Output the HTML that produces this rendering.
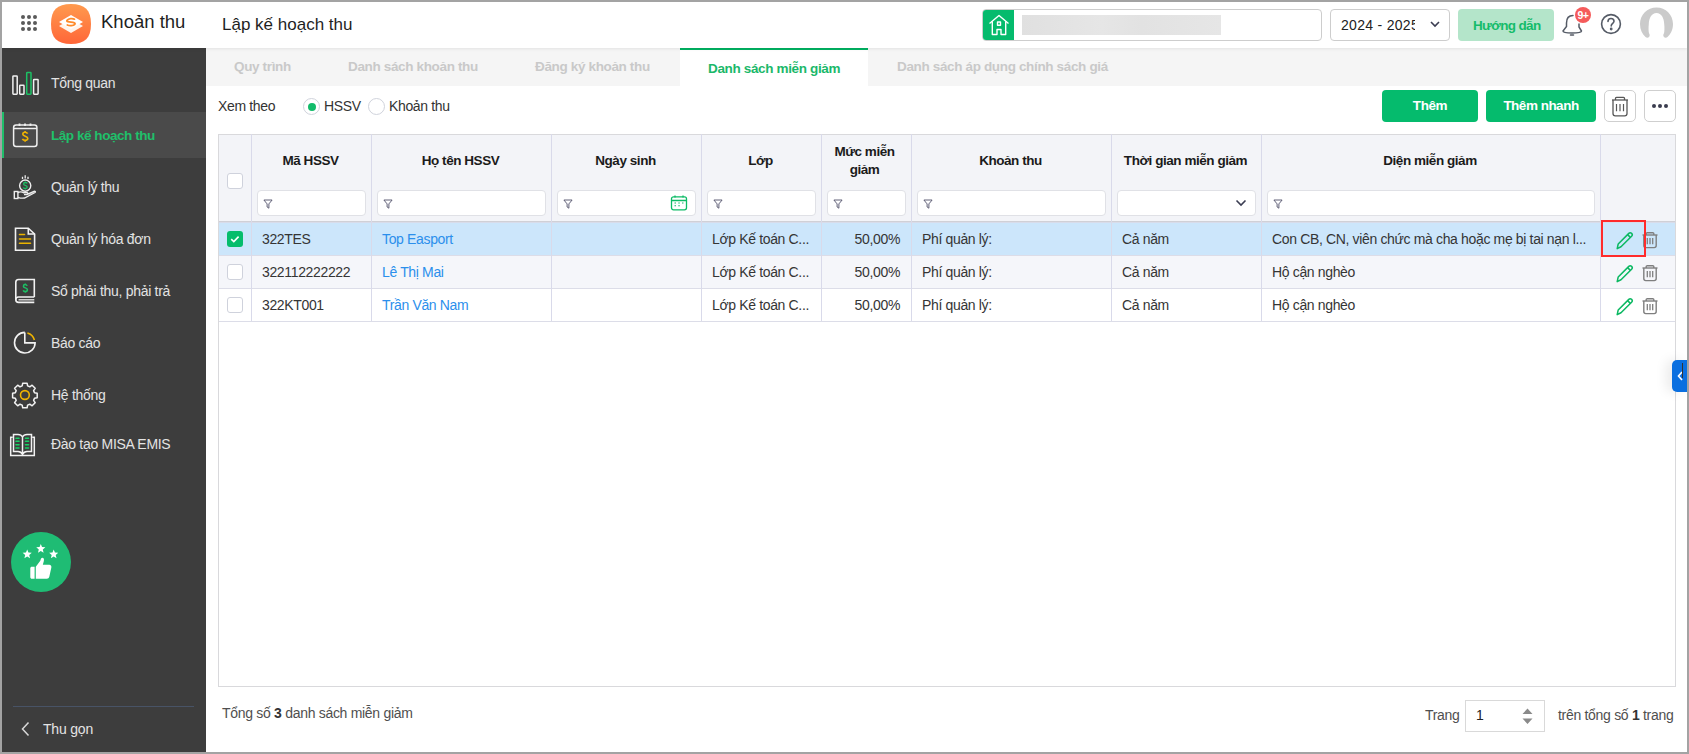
<!DOCTYPE html>
<html><head><meta charset="utf-8">
<style>
*{box-sizing:border-box;margin:0;padding:0}
html,body{width:1689px;height:754px;overflow:hidden;background:#fff}
body{font-family:"Liberation Sans",sans-serif;position:relative;color:#222}
.a{position:absolute}
.t{position:absolute;white-space:nowrap;line-height:1}
.lbl{position:absolute;left:51px;font-size:14px;color:#e3e3e3;white-space:nowrap;line-height:1;letter-spacing:-0.3px}
.tab{position:absolute;top:60px;font-size:13.5px;color:#c9c9c9;font-weight:bold;white-space:nowrap;line-height:1;letter-spacing:-0.35px}
.vl{position:absolute;top:134px;width:1px;height:187px;background:#d9daea}
.hl{position:absolute;left:219px;width:1456px;height:1px;background:#dcdde8}
.fi{position:absolute;top:190px;height:26px;background:#fff;border:1px solid #e0e1e6;border-radius:4px}
.fi svg{position:absolute;left:5px;top:7.5px}
.ht{position:absolute;font-size:13.5px;font-weight:bold;color:#1b1b1b;white-space:nowrap;line-height:1;letter-spacing:-0.45px}
.c{position:absolute;font-size:14px;color:#353535;white-space:nowrap;line-height:1;letter-spacing:-0.35px}
.lnk{color:#2b8fec}
.cb{position:absolute;left:227px;width:16px;height:16px;border:1px solid #cfd2dc;border-radius:3px;background:#fff}
</style></head><body>
<!-- outer frame border -->
<div class="a" style="left:0;top:0;width:1689px;height:2px;background:#a3a3a3;z-index:20"></div>
<div class="a" style="left:0;top:752px;width:1689px;height:2px;background:#a3a3a3;z-index:20"></div>
<div class="a" style="left:0;top:0;width:2px;height:754px;background:#a3a3a3;z-index:20"></div>
<div class="a" style="left:1687px;top:0;width:2px;height:754px;background:#a3a3a3;z-index:20"></div>

<!-- HEADER -->
<div class="a" style="left:2px;top:2px;width:1685px;height:46px;background:#fff;box-shadow:0 1px 3px rgba(0,0,0,.08);z-index:5">
</div>
<div id="hdrc" class="a" style="left:0;top:0;width:1689px;height:48px;z-index:6">
  <svg class="a" style="left:21px;top:15px" width="16" height="16" viewBox="0 0 16 16" fill="#5a5a5a">
    <circle cx="2" cy="2" r="2"/><circle cx="8" cy="2" r="2"/><circle cx="14" cy="2" r="2"/>
    <circle cx="2" cy="8" r="2"/><circle cx="8" cy="8" r="2"/><circle cx="14" cy="8" r="2"/>
    <circle cx="2" cy="14" r="2"/><circle cx="8" cy="14" r="2"/><circle cx="14" cy="14" r="2"/>
  </svg>
  <svg class="a" style="left:51px;top:4px" width="40" height="40" viewBox="0 0 40 40">
    <defs><linearGradient id="lg" x1="0" y1="0" x2="0" y2="1"><stop offset="0" stop-color="#ff9a4e"/><stop offset="1" stop-color="#ff6638"/></linearGradient></defs>
    <path d="M20 0C34 0 40 6 40 20S34 40 20 40 0 34 0 20 6 0 20 0Z" fill="url(#lg)"/>
    <path d="M8 22 L20 15 L32 22 L20 29Z" fill="#fff4ec"/>
    <path d="M8 18 L20 11 L32 18 L20 25Z" fill="#ffffff"/>
    <path d="M23.5 15.2 C21.5 14 17.5 14.6 16 16.3 C15 17.6 18 18 20 18.2 C22.5 18.5 25 19 23.8 20.3 C22.5 21.7 18.5 22.2 16.3 21" stroke="#ff8a2a" stroke-width="1.7" fill="none" stroke-linecap="round"/>
  </svg>
  <div class="t" style="left:101px;top:13px;font-size:18.5px;color:#1f1f1f">Khoản thu</div>
  <div class="t" style="left:222px;top:16px;font-size:17px;color:#1f1f1f">Lập kế hoạch thu</div>
  <!-- search -->
  <div class="a" style="left:982px;top:9px;width:340px;height:32px;border:1px solid #cdcdcd;border-radius:4px;background:#fff;overflow:hidden">
    <div class="a" style="left:-1px;top:-1px;width:32px;height:32px;background:#05bb6d"></div>
    <div class="a" style="left:39px;top:5px;width:199px;height:20px;background:linear-gradient(90deg,#e0e0e0,#e6e6e6 40%,#e2e2e2 60%,#e6e6e6)"></div>
  </div>
  <svg class="a" style="left:986.5px;top:13px" width="24" height="24" viewBox="0 0 24 24" fill="none" stroke="#fff" stroke-width="1.4" stroke-linejoin="round">
    <path d="M2.5 10.5 L12 2.5 L21.5 10.5"/>
    <path d="M5.3 8.3 V21.5 H10 V16.5 H14 V21.5 H18.7 V8.3"/>
    <rect x="10.5" y="9" width="3" height="3.2"/>
  </svg>
  <div class="a" style="left:1330px;top:9px;width:120px;height:32px;border:1px solid #cdcdcd;border-radius:4px;background:#fff;overflow:hidden">
    <div class="t" style="left:10px;top:8px;font-size:14px;color:#222;width:74px;overflow:hidden;letter-spacing:0.3px">2024 - 2025</div>
  </div>
  <svg class="a" style="left:1430px;top:20px" width="10" height="8" viewBox="0 0 10 8" fill="none" stroke="#3b3d52" stroke-width="1.6"><path d="M1 2 L5 6 L9 2"/></svg>
  <div class="a" style="left:1458px;top:9px;width:96px;height:32px;border-radius:4px;background:#b4e5ca"></div>
  <div class="t" style="left:1473px;top:19px;font-size:13.5px;font-weight:bold;color:#14bc6a;letter-spacing:-0.65px">Hướng dẫn</div>
  <!-- bell -->
  <svg class="a" style="left:1560px;top:12px" width="26" height="26" viewBox="0 0 26 26" fill="none" stroke="#555b66" stroke-width="1.5" stroke-linecap="round">
    <path d="M13 3.5 C8 3.5 6.5 7.5 6.5 11 V14.5 L3 19 C3 20.5 7 21 12 21 C17 21 21.5 20.5 21.5 19 L19 15 V12"/>
    <path d="M10.5 23 H13.5"/>
  </svg>
  <div class="a" style="left:1575px;top:7px;width:16px;height:16px;border-radius:50%;background:#f55b5b;color:#fff;font-size:10.5px;font-weight:bold;text-align:center;line-height:16px;letter-spacing:-0.6px">9+</div>
  <svg class="a" style="left:1599px;top:12px" width="24" height="24" viewBox="0 0 24 24" fill="none" stroke="#555b66" stroke-width="1.6" stroke-linecap="round">
    <circle cx="12" cy="12" r="9.4"/>
    <path d="M9 9.5 C9 7.5 10.5 6.5 12 6.5 C13.7 6.5 15 7.6 15 9.3 C15 11.3 12.2 11.6 12.2 14"/>
    <circle cx="12.2" cy="17" r="0.6" fill="#555b66"/>
  </svg>
  <svg class="a" style="left:1639px;top:6px" width="36" height="36" viewBox="0 0 36 36">
    <path fill-rule="evenodd" fill="#cbcbcb" d="M17.5 1.5 C26.7 1.5 34 8.8 34 18 C34 23.5 31.8 28 28.5 31 C27.5 32 25.5 32 24.8 30.8 C24 29.5 24.3 28.3 25 27.2 C25.5 25 25.6 22 25.2 18 C25 12 22.5 7 17.5 7 C12.5 7 10 12 9.8 18 C9.4 22 9.5 25 10 27.2 C10.7 28.3 11 29.5 10.2 30.8 C9.5 32 7.5 32 6.5 31 C3.2 28 1 23.5 1 18 C1 8.8 8.3 1.5 17.5 1.5Z"/>
  </svg>
</div>

<!-- SIDEBAR -->
<div class="a" style="left:2px;top:48px;width:204px;height:704px;background:#3d3d3d"></div>
<div class="a" style="left:2px;top:112px;width:204px;height:46px;background:#4a4a4a"></div>
<div class="a" style="left:2px;top:112px;width:2px;height:46px;background:#1fbe6a"></div>
<div class="lbl" style="top:76px">Tổng quan</div>
<div class="lbl" style="top:129px;color:#1fc06a;font-weight:bold;font-size:13.5px;letter-spacing:-0.45px">Lập kế hoạch thu</div>
<div class="lbl" style="top:180px">Quản lý thu</div>
<div class="lbl" style="top:232px">Quản lý hóa đơn</div>
<div class="lbl" style="top:284px">Sổ phải thu, phải trả</div>
<div class="lbl" style="top:336px">Báo cáo</div>
<div class="lbl" style="top:388px">Hệ thống</div>
<div class="lbl" style="top:437px">Đào tạo MISA EMIS</div>

<!-- sidebar icons -->
<svg class="a" style="left:5px;top:65px" width="40" height="40" viewBox="0 0 40 40" fill="none" stroke-width="1.5">
  <rect x="7.9" y="11" width="4.3" height="18.2" rx="0.6" stroke="#f0f0f0"/>
  <rect x="14.7" y="20.3" width="4.3" height="8.9" rx="0.6" stroke="#f0f0f0"/>
  <rect x="21.7" y="7.6" width="4.3" height="21.6" rx="0.6" stroke="#1cc064"/>
  <rect x="28.6" y="14.5" width="4.5" height="14.7" rx="0.6" stroke="#f0f0f0"/>
</svg>
<svg class="a" style="left:5px;top:115px" width="40" height="40" viewBox="0 0 40 40" fill="none" stroke-width="1.5">
  <rect x="8.6" y="10" width="23.3" height="21.6" rx="2.5" stroke="#f0f0f0"/>
  <path d="M8.6 13.5 H31.9" stroke="#f0f0f0"/>
  <path d="M14.5 8.5 V11 M20 8.5 V11 M25.5 8.5 V11" stroke="#f0f0f0" stroke-width="1.8"/>
  <path d="M22.6 18.7 C22 17.6 21 17.3 20 17.3 C18.6 17.3 17.8 18.1 17.8 19.2 C17.8 21.6 22.8 20.7 22.8 23.3 C22.8 24.5 21.8 25.3 20.2 25.3 C19 25.3 17.9 24.8 17.4 23.8 M20.1 16 V17.3 M20.1 25.3 V26.7" stroke="#f0b400" stroke-width="1.6"/>
</svg>
<svg class="a" style="left:5px;top:167px" width="40" height="40" viewBox="0 0 40 40" fill="none" stroke-width="1.4">
  <path d="M20.2 8.2 V11.5 M17.5 9.8 V12 M23 9.8 V12" stroke="#eee" stroke-width="1.3"/>
  <circle cx="20.2" cy="18.6" r="5.6" stroke="#eee"/>
  <path d="M22.3 16.4 C21.9 15.7 21.2 15.5 20.3 15.5 C19.3 15.5 18.6 16.1 18.6 16.9 C18.6 18.7 22.2 18 22.2 20 C22.2 20.9 21.4 21.5 20.2 21.5 C19.3 21.5 18.5 21.1 18.2 20.4 M20.3 14.5 V15.5 M20.3 21.5 V22.6" stroke="#1cc064" stroke-width="1.3"/>
  <rect x="9.3" y="24.5" width="3.6" height="7" stroke="#eee"/>
  <path d="M12.9 25.5 C15 24.5 17 24.8 19 25.8 H22 C23 25.8 23.3 27.3 22 27.6 H19 M12.9 30.3 C15 31 17 31.5 19.5 31 L30 25.5 C30.8 25 30 23.8 29 24.3 L23.3 27" stroke="#eee"/>
</svg>
<svg class="a" style="left:5px;top:219px" width="40" height="40" viewBox="0 0 40 40" fill="none" stroke-width="1.6">
  <path d="M10.5 9.2 H23.3 L29.6 15 V31.3 H10.5 Z" stroke="#f2f2f2"/>
  <path d="M23.3 9.2 V15 H29.6" stroke="#f2f2f2"/>
  <path d="M14.5 15.5 H19.5 M14.5 20 H25.5 M14.5 24.3 H25.5" stroke="#eab400" stroke-width="1.6" stroke-linecap="round"/>
</svg>
<svg class="a" style="left:5px;top:271px" width="40" height="40" viewBox="0 0 40 40" fill="none" stroke-width="1.6">
  <path d="M29.3 26 V8.5 H13.5 C11.8 8.5 10.8 9.5 10.8 11.2 V28.8 C10.8 30.5 11.8 31.4 13.5 31.4 H29.3" stroke="#f2f2f2"/>
  <path d="M10.8 28.8 C10.8 27 11.8 26 13.5 26 H29.3" stroke="#f2f2f2"/>
  <path d="M13.5 28.8 H29.3" stroke="#dedede" stroke-width="1.4"/>
  <path d="M22.2 14.8 C21.7 13.9 21 13.6 20.2 13.6 C19 13.6 18.4 14.3 18.4 15.2 C18.4 17.3 22.4 16.5 22.4 18.8 C22.4 19.8 21.5 20.6 20.3 20.6 C19.4 20.6 18.5 20.2 18.1 19.4 M20.3 12.4 V13.6 M20.3 20.6 V21.8" stroke="#1cc064" stroke-width="1.5"/>
</svg>
<svg class="a" style="left:5px;top:323px" width="40" height="40" viewBox="0 0 40 40" fill="none" stroke-width="1.6">
  <path d="M19.8 9.4 V19.9 H30.1 A10.3 10.3 0 1 1 19.8 9.4" stroke="#f2f2f2"/>
  <path d="M22.4 10 A10 10 0 0 1 29.4 17" stroke="#f0b400"/>
</svg>
<svg class="a" style="left:5px;top:375px" width="40" height="40" viewBox="0 0 40 40" fill="none" stroke-width="1.5">
  <path d="M17.7 8.2 H22.1 L22.6 10.9 L24.8 11.8 L27.1 10.2 L30.2 13.3 L28.6 15.6 L29.5 17.8 L32.2 18.3 V22.7 L29.5 23.2 L28.6 25.4 L30.2 27.7 L27.1 30.8 L24.8 29.2 L22.6 30.1 L22.1 32.8 H17.7 L17.2 30.1 L15 29.2 L12.7 30.8 L9.6 27.7 L11.2 25.4 L10.3 23.2 L7.6 22.7 V18.3 L10.3 17.8 L11.2 15.6 L9.6 13.3 L12.7 10.2 L15 11.8 L17.2 10.9 Z" stroke="#f2f2f2" stroke-linejoin="round"/>
  <circle cx="19.9" cy="20" r="4.4" stroke="#f0b400" stroke-width="1.6"/>
</svg>
<svg class="a" style="left:5px;top:424px" width="40" height="40" viewBox="0 0 40 40" fill="none" stroke-width="1.5">
  <path d="M7.7 13.2 H5.7 V31.5 H29.3 V13.2 H27.3" stroke="#f2f2f2"/>
  <path d="M17.5 30.5 V13 C16.5 11 15 10.5 13 10.5 H8.5 V27.5 H13 C15 27.5 16.5 28.5 17.5 30.5 C18.5 28.5 20 27.5 22 27.5 H26.5 V10.5 H22 C20 10.5 18.5 11 17.5 13" stroke="#f2f2f2"/>
  <path d="M11 14.3 H14 M11 17.3 H14 M11 20.7 H14 M11 24 H14 M20.5 14.3 H23.5 M20.5 17.3 H23.5 M20.5 20.7 H23.5 M20.5 24 H23.5" stroke="#16d266" stroke-width="1.6" stroke-linecap="round"/>
</svg>

<!-- thumbs-up button -->
<svg class="a" style="left:11px;top:532px" width="60" height="60" viewBox="0 0 60 60">
  <circle cx="30" cy="30" r="30" fill="#1fbc74"/>
  <path d="M16.20 17.50 L17.43 20.60 L20.77 20.82 L18.20 22.95 L19.02 26.18 L16.20 24.40 L13.38 26.18 L14.20 22.95 L11.63 20.82 L14.97 20.60ZM29.80 12.00 L31.03 15.10 L34.37 15.32 L31.80 17.45 L32.62 20.68 L29.80 18.90 L26.98 20.68 L27.80 17.45 L25.23 15.32 L28.57 15.10ZM42.70 17.50 L43.93 20.60 L47.27 20.82 L44.70 22.95 L45.52 26.18 L42.70 24.40 L39.88 26.18 L40.70 22.95 L38.13 20.82 L41.47 20.60Z" fill="#fff"/>
  <path transform="translate(1.3,1.8)" d="M19.5 33 H22.3 V45 H19.5 C18.7 45 18 44.3 18 43.5 V34.5 C18 33.7 18.7 33 19.5 33 Z M23.5 33 L28 27 C28.5 25 29 24 30 24 C31.5 24 32 25.5 31.5 27.5 L30.5 31 H37 C38.5 31 39.5 32.5 39 34 L37 43 C36.7 44.3 35.8 45 34.5 45 H23.5 Z" fill="#fff"/>
</svg>
<div class="a" style="left:13px;top:706px;width:181px;height:1px;background:#485366"></div>
<svg class="a" style="left:19px;top:721px" width="12" height="16" viewBox="0 0 12 16" fill="none" stroke="#d8d8d8" stroke-width="1.5"><path d="M9.5 1.5 L3.5 8 L9.5 14.5"/></svg>
<div class="t" style="left:43px;top:722px;font-size:14px;color:#e3e3e3;letter-spacing:-0.2px">Thu gọn</div>

<!-- MAIN: tabs -->
<div class="a" style="left:206px;top:48px;width:1481px;height:38px;background:#f5f5f5"></div>
<div class="a" style="left:680px;top:48px;width:188px;height:38px;background:#fff;border-top:2px solid #00b262"></div>
<div class="tab" style="left:234px">Quy trình</div>
<div class="tab" style="left:348px">Danh sách khoản thu</div>
<div class="tab" style="left:535px">Đăng ký khoản thu</div>
<div class="tab" style="left:708px;color:#1bb86a;top:62px">Danh sách miễn giảm</div>
<div class="tab" style="left:897px">Danh sách áp dụng chính sách giá</div>

<!-- toolbar -->
<div class="t" style="left:218px;top:99px;font-size:14px;color:#333;letter-spacing:-0.35px">Xem theo</div>
<div class="a" style="left:303px;top:98px;width:17px;height:17px;border:1px solid #d0d3dc;border-radius:50%;background:#fff"><div class="a" style="left:3.5px;top:3.5px;width:8px;height:8px;border-radius:50%;background:#12bb6a"></div></div>
<div class="t" style="left:324px;top:99px;font-size:14px;color:#333;letter-spacing:-0.35px">HSSV</div>
<div class="a" style="left:368px;top:98px;width:17px;height:17px;border:1px solid #d0d3dc;border-radius:50%;background:#fff"></div>
<div class="t" style="left:389px;top:99px;font-size:14px;color:#333;letter-spacing:-0.35px">Khoản thu</div>

<div class="a" style="left:1382px;top:90px;width:96px;height:32px;border-radius:4px;background:#05bb6d"></div>
<div class="t" style="left:1382px;width:96px;text-align:center;top:99px;font-size:13.5px;font-weight:bold;color:#fff;letter-spacing:-0.4px">Thêm</div>
<div class="a" style="left:1486px;top:90px;width:110px;height:32px;border-radius:4px;background:#05bb6d"></div>
<div class="t" style="left:1486px;width:110px;text-align:center;top:99px;font-size:13.5px;font-weight:bold;color:#fff;letter-spacing:-0.5px">Thêm nhanh</div>
<div class="a" style="left:1604px;top:90px;width:32px;height:32px;border-radius:5px;border:1px solid #cfcfcf;background:#fff"></div>
<svg class="a" style="left:1604px;top:90px" width="32" height="32" viewBox="0 0 32 32" fill="none" stroke="#575757" stroke-width="1.3">
  <path d="M8 10 H24"/><path d="M11.5 10 V8.3 C11.5 7.7 11.9 7.3 12.5 7.3 H19.5 C20.1 7.3 20.5 7.7 20.5 8.3 V10"/>
  <path d="M9 10 V23.5 C9 25 10 25.8 11.3 25.8 H20.7 C22 25.8 23 25 23 23.5 V10"/>
  <path d="M12.5 14 V21.3 M16 14 V21.3 M19.5 14 V21.3" stroke-width="1.2"/>
</svg>
<div class="a" style="left:1644px;top:90px;width:32px;height:32px;border-radius:5px;border:1px solid #cfcfcf;background:#fff"></div>
<svg class="a" style="left:1644px;top:90px" width="32" height="32" viewBox="0 0 32 32" fill="#3a3d4f">
  <circle cx="10" cy="16" r="2"/><circle cx="16" cy="16" r="2"/><circle cx="22" cy="16" r="2"/>
</svg>
<!-- TABLE -->
<div class="a" style="left:218px;top:134px;width:1458px;height:553px;border:1px solid #d9d9dc;background:#fff"></div>
<div class="a" style="left:219px;top:135px;width:1456px;height:87px;background:#f3f4f8"></div>
<div class="a" style="left:219px;top:222px;width:1456px;height:33px;background:#cce6fb"></div>
<div class="a" style="left:219px;top:255px;width:1456px;height:33px;background:#f5f6fa"></div>
<div class="hl" style="top:221px;height:2px;background:linear-gradient(#d0d0d6 50%,#d8dcea 50%)"></div>
<div class="hl" style="top:255px"></div>
<div class="hl" style="top:288px"></div>
<div class="hl" style="top:321px"></div>
<div class="vl" style="left:251px"></div>
<div class="vl" style="left:371px"></div>
<div class="vl" style="left:551px"></div>
<div class="vl" style="left:701px"></div>
<div class="vl" style="left:821px"></div>
<div class="vl" style="left:911px"></div>
<div class="vl" style="left:1111px"></div>
<div class="vl" style="left:1261px"></div>
<div class="vl" style="left:1600px"></div>
<div class="ht" style="left:251px;width:119px;top:154px;text-align:center">Mã HSSV</div>
<div class="ht" style="left:371px;width:179px;top:154px;text-align:center">Họ tên HSSV</div>
<div class="ht" style="left:551px;width:149px;top:154px;text-align:center">Ngày sinh</div>
<div class="ht" style="left:701px;width:119px;top:154px;text-align:center">Lớp</div>
<div class="ht" style="left:911px;width:199px;top:154px;text-align:center">Khoản thu</div>
<div class="ht" style="left:1111px;width:149px;top:154px;text-align:center">Thời gian miễn giảm</div>
<div class="ht" style="left:1261px;width:338px;top:154px;text-align:center">Diện miễn giảm</div>
<div class="ht" style="left:820px;width:89px;top:143px;text-align:center;line-height:18px;white-space:normal">Mức miễn<br>giảm</div>
<div class="fi" style="left:257px;width:109px"><svg width="10" height="10" viewBox="0 0 10 10" fill="none" stroke="#50506a" stroke-width="0.9"><path d="M0.9 1 H9.1 L5.9 4.9 V9.2 L4.1 8 V4.9 Z" stroke-linejoin="round"/></svg></div>
<div class="fi" style="left:377px;width:169px"><svg width="10" height="10" viewBox="0 0 10 10" fill="none" stroke="#50506a" stroke-width="0.9"><path d="M0.9 1 H9.1 L5.9 4.9 V9.2 L4.1 8 V4.9 Z" stroke-linejoin="round"/></svg></div>
<div class="fi" style="left:557px;width:139px"><svg width="10" height="10" viewBox="0 0 10 10" fill="none" stroke="#50506a" stroke-width="0.9"><path d="M0.9 1 H9.1 L5.9 4.9 V9.2 L4.1 8 V4.9 Z" stroke-linejoin="round"/></svg></div>
<div class="fi" style="left:707px;width:109px"><svg width="10" height="10" viewBox="0 0 10 10" fill="none" stroke="#50506a" stroke-width="0.9"><path d="M0.9 1 H9.1 L5.9 4.9 V9.2 L4.1 8 V4.9 Z" stroke-linejoin="round"/></svg></div>
<div class="fi" style="left:827px;width:79px"><svg width="10" height="10" viewBox="0 0 10 10" fill="none" stroke="#50506a" stroke-width="0.9"><path d="M0.9 1 H9.1 L5.9 4.9 V9.2 L4.1 8 V4.9 Z" stroke-linejoin="round"/></svg></div>
<div class="fi" style="left:917px;width:189px"><svg width="10" height="10" viewBox="0 0 10 10" fill="none" stroke="#50506a" stroke-width="0.9"><path d="M0.9 1 H9.1 L5.9 4.9 V9.2 L4.1 8 V4.9 Z" stroke-linejoin="round"/></svg></div>
<div class="fi" style="left:1117px;width:139px"></div>
<div class="fi" style="left:1267px;width:328px"><svg width="10" height="10" viewBox="0 0 10 10" fill="none" stroke="#50506a" stroke-width="0.9"><path d="M0.9 1 H9.1 L5.9 4.9 V9.2 L4.1 8 V4.9 Z" stroke-linejoin="round"/></svg></div>
<div class="cb" style="top:173px"></div>
<div class="a" style="left:227px;top:231px;width:16px;height:16px;border-radius:3px;background:#05bd6c"></div>
<svg class="a" style="left:227px;top:231px" width="16" height="16" viewBox="0 0 16 16" fill="none" stroke="#fff" stroke-width="1.6"><path d="M4.2 8.2 L6.8 10.6 L11.6 5.6"/></svg>
<div class="c" style="left:262px;top:232px">322TES</div>
<div class="c lnk" style="left:382px;top:232px">Top Easport</div>
<div class="c" style="left:712px;top:232px">Lớp Kế toán C...</div>
<div class="c" style="left:822px;width:78px;text-align:right;top:232px">50,00%</div>
<div class="c" style="left:922px;top:232px">Phí quản lý:</div>
<div class="c" style="left:1122px;top:232px">Cả năm</div>
<div class="c" style="left:1272px;top:232px">Con CB, CN, viên chức mà cha hoặc mẹ bị tai nạn l...</div>
<svg class="a" style="left:1612px;top:228px" width="22" height="22" viewBox="0 0 22 22" fill="none" stroke="#0bb862" stroke-width="1.5" stroke-linejoin="round"><path d="M5.2 20.6 L6.2 16 L16.8 5.4 C17.6 4.6 18.8 4.6 19.6 5.4 C20.4 6.2 20.4 7.4 19.6 8.2 L9 18.8 Z"/><path d="M15.6 6.6 L18.4 9.4"/></svg>
<svg class="a" style="left:1640px;top:228px" width="20" height="22" viewBox="0 0 20 22" fill="none" stroke="#7f7f7f" stroke-width="1.4"><path d="M2.5 7 H17.5"/><path d="M6.2 7 V5.6 C6.2 5 6.6 4.7 7.2 4.7 H12.8 C13.4 4.7 13.8 5 13.8 5.6 V7"/><path d="M3.8 7 V17.6 C3.8 18.8 4.6 19.6 5.8 19.6 H14.2 C15.4 19.6 16.2 18.8 16.2 17.6 V7"/><path d="M7.3 10 V16.3 M10 10 V16.3 M12.7 10 V16.3" stroke-width="1.3"/></svg>
<div class="cb" style="top:264px"></div>
<div class="c" style="left:262px;top:265px">322112222222</div>
<div class="c lnk" style="left:382px;top:265px">Lê Thị Mai</div>
<div class="c" style="left:712px;top:265px">Lớp Kế toán C...</div>
<div class="c" style="left:822px;width:78px;text-align:right;top:265px">50,00%</div>
<div class="c" style="left:922px;top:265px">Phí quản lý:</div>
<div class="c" style="left:1122px;top:265px">Cả năm</div>
<div class="c" style="left:1272px;top:265px">Hộ cận nghèo</div>
<svg class="a" style="left:1612px;top:261px" width="22" height="22" viewBox="0 0 22 22" fill="none" stroke="#0bb862" stroke-width="1.5" stroke-linejoin="round"><path d="M5.2 20.6 L6.2 16 L16.8 5.4 C17.6 4.6 18.8 4.6 19.6 5.4 C20.4 6.2 20.4 7.4 19.6 8.2 L9 18.8 Z"/><path d="M15.6 6.6 L18.4 9.4"/></svg>
<svg class="a" style="left:1640px;top:261px" width="20" height="22" viewBox="0 0 20 22" fill="none" stroke="#7f7f7f" stroke-width="1.4"><path d="M2.5 7 H17.5"/><path d="M6.2 7 V5.6 C6.2 5 6.6 4.7 7.2 4.7 H12.8 C13.4 4.7 13.8 5 13.8 5.6 V7"/><path d="M3.8 7 V17.6 C3.8 18.8 4.6 19.6 5.8 19.6 H14.2 C15.4 19.6 16.2 18.8 16.2 17.6 V7"/><path d="M7.3 10 V16.3 M10 10 V16.3 M12.7 10 V16.3" stroke-width="1.3"/></svg>
<div class="cb" style="top:297px"></div>
<div class="c" style="left:262px;top:298px">322KT001</div>
<div class="c lnk" style="left:382px;top:298px">Trần Văn Nam</div>
<div class="c" style="left:712px;top:298px">Lớp Kế toán C...</div>
<div class="c" style="left:822px;width:78px;text-align:right;top:298px">50,00%</div>
<div class="c" style="left:922px;top:298px">Phí quản lý:</div>
<div class="c" style="left:1122px;top:298px">Cả năm</div>
<div class="c" style="left:1272px;top:298px">Hộ cận nghèo</div>
<svg class="a" style="left:1612px;top:294px" width="22" height="22" viewBox="0 0 22 22" fill="none" stroke="#0bb862" stroke-width="1.5" stroke-linejoin="round"><path d="M5.2 20.6 L6.2 16 L16.8 5.4 C17.6 4.6 18.8 4.6 19.6 5.4 C20.4 6.2 20.4 7.4 19.6 8.2 L9 18.8 Z"/><path d="M15.6 6.6 L18.4 9.4"/></svg>
<svg class="a" style="left:1640px;top:294px" width="20" height="22" viewBox="0 0 20 22" fill="none" stroke="#7f7f7f" stroke-width="1.4"><path d="M2.5 7 H17.5"/><path d="M6.2 7 V5.6 C6.2 5 6.6 4.7 7.2 4.7 H12.8 C13.4 4.7 13.8 5 13.8 5.6 V7"/><path d="M3.8 7 V17.6 C3.8 18.8 4.6 19.6 5.8 19.6 H14.2 C15.4 19.6 16.2 18.8 16.2 17.6 V7"/><path d="M7.3 10 V16.3 M10 10 V16.3 M12.7 10 V16.3" stroke-width="1.3"/></svg>
<div class="a" style="left:1601px;top:220px;width:45px;height:37px;border:2px solid #ff2b2b;z-index:4"></div>
<svg class="a" style="left:670px;top:195px" width="18" height="16" viewBox="0 0 18 16" fill="none" stroke="#0dbb66" stroke-width="1.3"><rect x="1.5" y="1.8" width="15" height="13" rx="2"/><path d="M1.5 5.5 H16.5 M5 0.6 V2.6 M13 0.6 V2.6"/><path d="M4.5 8 H6 M8.3 8 H9.8 M12 8 H13.5 M4.5 10.8 H6 M8.3 10.8 H9.8" stroke-width="1.1"/></svg>
<svg class="a" style="left:1235px;top:199px" width="12" height="8" viewBox="0 0 12 8" fill="none" stroke="#3b3d52" stroke-width="1.6"><path d="M1.5 1.5 L6 6 L10.5 1.5"/></svg>
<div class="t" style="left:222px;top:706px;font-size:14px;color:#4f4f4f;letter-spacing:-0.3px">Tổng số <b style="color:#333">3</b> danh sách miễn giảm</div>
<div class="t" style="left:1425px;top:708px;font-size:14px;color:#4f4f4f;letter-spacing:-0.3px">Trang</div>
<div class="a" style="left:1465px;top:700px;width:80px;height:32px;border:1px solid #d9d9d9;background:#fff"></div>
<div class="t" style="left:1476px;top:708px;font-size:14px;color:#222">1</div>
<svg class="a" style="left:1520px;top:706px" width="14" height="20" viewBox="0 0 14 20" fill="#8a8a8a"><path d="M2.5 8 L7.5 2.5 L12.5 8Z M2.5 12.5 L7.5 18 L12.5 12.5Z"/></svg>
<div class="t" style="left:1558px;top:708px;font-size:14px;color:#4f4f4f;letter-spacing:-0.3px">trên tổng số <b style="color:#333">1</b> trang</div>
<div class="a" style="left:1672px;top:360px;width:15px;height:32px;border-radius:5px 0 0 5px;background:#0a6fe0;box-shadow:-6px 0 12px rgba(0,0,0,.08)"></div>
<svg class="a" style="left:1676px;top:369px" width="8" height="14" viewBox="0 0 8 14" fill="none" stroke="#fff" stroke-width="1.6"><path d="M6 3 L2.5 7 L6 11"/></svg>
<div class="a" style="left:1682px;top:363px;width:1px;height:15px;background:#333"></div>
</body></html>
